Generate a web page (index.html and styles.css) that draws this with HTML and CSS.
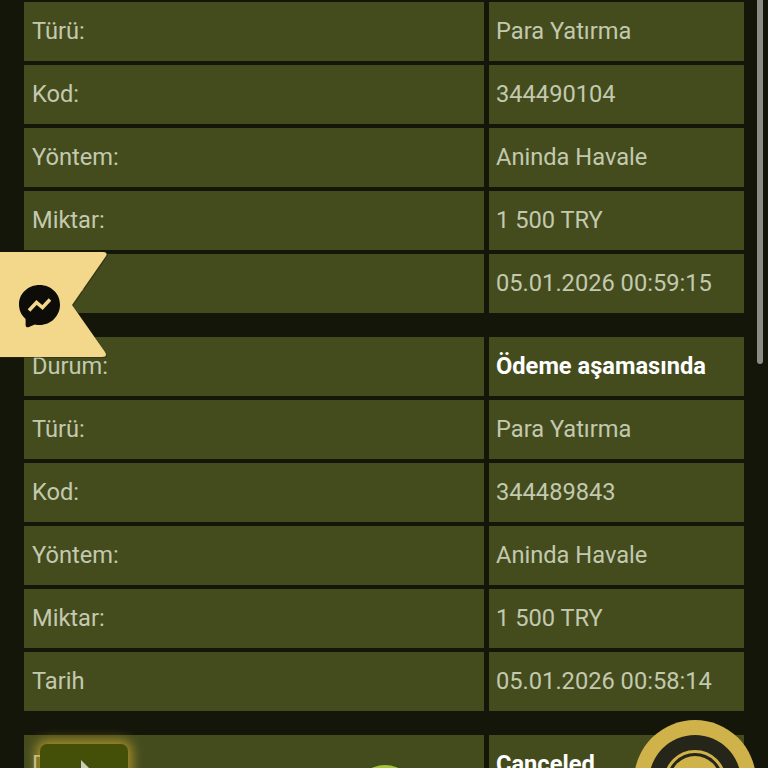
FILE: index.html
```html
<!DOCTYPE html>
<html lang="tr">
<head>
    <meta charset="UTF-8">
    <meta name="viewport" content="width=device-width, initial-scale=1.0">
    <title>Hesap Geçmişi</title>
    <link rel="stylesheet" href="styles.css">
</head>
<body>
    <main class="history">
        <section class="group">
            <div class="cell label">Türü:</div><div class="cell">Para Yatırma</div>
            <div class="cell label">Kod:</div><div class="cell">344490104</div>
            <div class="cell label">Yöntem:</div><div class="cell">Aninda Havale</div>
            <div class="cell label">Miktar:</div><div class="cell">1 500 TRY</div>
            <div class="cell label">Tarih</div><div class="cell">05.01.2026 00:59:15</div>
        </section>

        <section class="group">
            <div class="cell label">Durum:</div><div class="cell status">Ödeme aşamasında</div>
            <div class="cell label">Türü:</div><div class="cell">Para Yatırma</div>
            <div class="cell label">Kod:</div><div class="cell">344489843</div>
            <div class="cell label">Yöntem:</div><div class="cell">Aninda Havale</div>
            <div class="cell label">Miktar:</div><div class="cell">1 500 TRY</div>
            <div class="cell label">Tarih</div><div class="cell">05.01.2026 00:58:14</div>
        </section>

        <section class="group">
            <div class="cell label">Durum:</div><div class="cell status">Canceled</div>
        </section>
    </main>

    <!-- floating things over the list -->
    <div class="scrollbar"></div>

    <a class="chat-ribbon" aria-label="Messenger">
        <svg width="110" height="108" viewBox="0 0 110 108">
            <path class="ribbon-shadow" d="M0 1H104Q109 1 107 5L73 54L106 101Q109 106 103 106H0Z"/>
            <path class="ribbon-shape" d="M0 0H103Q108 0 106 4L72 53L105 100Q108 105 102 105H0Z"/>
            <path class="bubble" d="M39.500 33C28 33 19 41.500 19 52.500C19 58.500 21.600 63.500 25.600 67V73C25.600 75 27.300 75.800 29 75L34.800 72.500C36.300 72.900 37.900 73 39.500 73C51 73 60 64 60 52.500C60 41.500 51 33 39.500 33Z"/>
            <path class="bolt" d="M29 58.500L36.500 50.500L42.500 55.500L50 47.500"/>
        </svg>
    </a>

    <div class="play-btn"><span class="play-arrow"></span></div>
    <div class="green-btn"></div>
    <div class="gold-btn"><div class="gold-inner"><div class="gold-core"></div></div></div>
</body>
</html>
```

FILE: styles.css
```css
body {
    margin: 0;
    height: 768px;
    overflow: hidden;
    position: relative;
    background-color: #14160a;
    font-family: Roboto, "Liberation Sans", sans-serif;
    font-size: 23.65px;
    color: #c3c9ae;
}

/* List of transactions */
.history {
    display: flex;
    flex-direction: column;
    gap: 24px;
    padding: 2px 0 0 24px;
}

.group {
    display: grid;
    grid-template-columns: 460px 255px;
    grid-auto-rows: 59px;
    column-gap: 5px;
    row-gap: 4px;
}

.cell {
    display: flex;
    align-items: center;
    box-sizing: border-box;
    padding: 0 0 2px 7px;
    background-color: #444c1e;
}

.label {
    padding-left: 8px;
}

.status {
    font-size: 23.65px;
    font-weight: 700;
    color: #fff;
}

/* Page scrollbar */
.scrollbar {
    position: absolute;
    top: 0;
    left: 757px;
    width: 6px;
    height: 364px;
    background-color: #8b8d84;
    border-radius: 0 0 3px 3px;
}

/* Messenger ribbon */
.chat-ribbon {
    position: absolute;
    top: 252px;
    left: 0;
    display: block;
    width: 110px;
    height: 108px;
}

.chat-ribbon svg {
    display: block;
}

.ribbon-shadow {
    fill: #2a2d12;
    opacity: 0.6;
}

.ribbon-shape {
    fill: #f3d88b;
}

.bubble {
    fill: #0d0c08;
}

.bolt {
    fill: none;
    stroke: #f3d88b;
    stroke-width: 3.500;
}

/* Video button at bottom left */
.play-btn {
    position: absolute;
    top: 744px;
    left: 40px;
    width: 88px;
    height: 60px;
    background-color: #445008;
    border-radius: 7px;
    box-shadow: 0 0 12px 4px rgba(200, 165, 50, 0.75);
}

.play-arrow {
    position: absolute;
    top: 16px;
    left: 41px;
    width: 0;
    height: 0;
    border-left: 12px solid #c8cdb8;
    border-top: 12px solid transparent;
    border-bottom: 12px solid transparent;
}

/* Green button at bottom centre */
.green-btn {
    position: absolute;
    top: 765px;
    left: 355px;
    width: 60px;
    height: 60px;
    border-radius: 50%;
    background-color: #a3c43a;
}

/* Gold round button at bottom right */
.gold-btn {
    position: absolute;
    top: 720px;
    left: 634px;
    width: 122px;
    height: 122px;
    box-sizing: border-box;
    padding: 15px;
    border-radius: 50%;
    background-color: #cfb24a;
}

.gold-inner {
    width: 92px;
    height: 92px;
    box-sizing: border-box;
    padding: 15px;
    border-radius: 50%;
    background-color: #25251a;
}

.gold-core {
    width: 62px;
    height: 62px;
    box-sizing: border-box;
    border: 3px solid #cfb24a;
    border-radius: 50%;
    position: relative;
}

.gold-core::after {
    content: "";
    position: absolute;
    top: 3px;
    left: 3px;
    width: 50px;
    height: 50px;
    border-radius: 50%;
    background-color: #cfb24a;
}
```
